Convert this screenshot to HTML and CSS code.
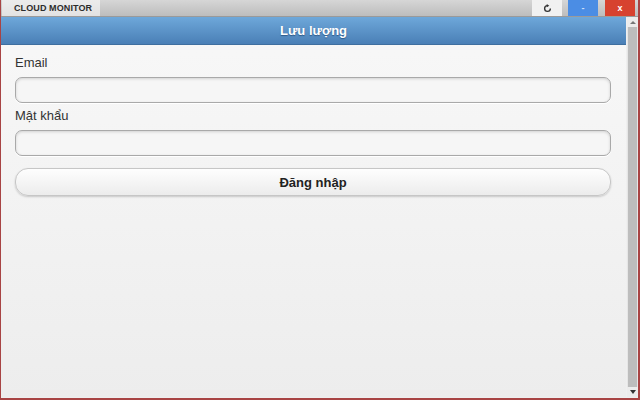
FILE: index.html
```html
<!DOCTYPE html>
<html lang="vi">
<head>
<meta charset="utf-8">
<title>Cloud Monitor</title>
<link rel="stylesheet" href="styles.css">
</head>
<body>
<div class="window">
  <div class="titlebar">
    <div class="tab">CLOUD MONITOR</div>
    <div class="spacer"></div>
    <div class="wbtn refresh">
      <svg width="9" height="9" viewBox="0 0 10 10"><path d="M8.2 5 A3.2 3.2 0 1 1 5 1.8" fill="none" stroke="#333" stroke-width="1.5"/><path d="M4.2 0 L7 1.9 L4.2 3.6 Z" fill="#333"/></svg>
    </div>
    <div class="wbtn min">-</div>
    <div class="wbtn close">x</div>
  </div>
  <div class="main">
    <div class="content">
      <div class="header">Lưu lượng</div>
      <div class="form">
        <label class="label">Email</label>
        <input class="field" type="text">
        <label class="label second">Mật khẩu</label>
        <input class="field" type="password">
        <button class="login">Đăng nhập</button>
      </div>
    </div>
    <div class="scrollbar">
      <div class="arrow up"></div>
      <div class="thumb"></div>
      <div class="arrow down"></div>
    </div>
  </div>
  <div class="bottom"></div>
</div>
</body>
</html>
```
FILE: styles.css
```css
html, body {
  margin: 0;
  padding: 0;
  width: 640px;
  height: 400px;
  overflow: hidden;
  background: #efefef;
  font-family: "Liberation Sans", Arial, sans-serif;
}
.window {
  width: 640px;
  height: 400px;
  display: flex;
  flex-direction: column;
  box-sizing: border-box;
  border-left: 1px solid #a84444;
  border-right: 2px solid #a84444;
  background: #efefef;
}
.titlebar {
  height: 16px;
  flex: none;
  display: flex;
  align-items: stretch;
  background: linear-gradient(#d6d6d6, #bdbdbd);
  border-bottom: 1px solid #9a9a9a;
}
.tab {
  margin-left: 1px;
  width: 98px;
  background: linear-gradient(#ececec, #e2e2e2);
  font-size: 9px;
  font-weight: bold;
  color: #2c2c2c;
  line-height: 17px;
  padding-left: 12px;
  box-sizing: border-box;
  letter-spacing: 0.1px;
}
.spacer { flex: 1; }
.wbtn {
  width: 30px;
  display: flex;
  align-items: center;
  justify-content: center;
  font-size: 9px;
  font-weight: bold;
  color: #fff;
}
.refresh { background: #f1f1f1; margin-right: 6px; }
.min { background: #4b8de4; margin-right: 7px; color: #cfe0f8; }
.close { background: #d7422f; margin-right: 3px; }
.main {
  flex: 1;
  display: flex;
  min-height: 0;
}
.content {
  flex: 1;
  display: flex;
  flex-direction: column;
  background: linear-gradient(#f8f8f8, #ededed);
}
.header {
  height: 27px;
  flex: none;
  background: linear-gradient(#6ea8da, #4a7fb6);
  border-bottom: 1px solid #3f6f9f;
  color: #fff;
  font-weight: bold;
  font-size: 13px;
  line-height: 27px;
  text-align: center;
  text-shadow: 0 1px 1px #2f5a88;
}
.form {
  display: flex;
  flex-direction: column;
  padding: 10px 15px 0 14px;
}
.label {
  font-size: 13px;
  line-height: 16px;
  color: #333;
  margin-bottom: 6px;
}
.label.second { margin-top: 5px; }
.field {
  height: 26px;
  box-sizing: border-box;
  border: 1px solid #a9a9a9;
  border-radius: 7px;
  background: #f6f6f6;
  box-shadow: inset 0 1px 3px rgba(0,0,0,0.15), 0 1px 0 #fff;
  margin: 0;
  padding: 0 8px;
  font-size: 13px;
  outline: none;
}
.login {
  margin-top: 12px;
  height: 28px;
  border: 1px solid #c6c6c6;
  border-radius: 13px;
  background: linear-gradient(#fefefe, #ececec);
  box-shadow: 0 1px 2px rgba(0,0,0,0.18);
  font-family: "Liberation Sans", Arial, sans-serif;
  font-weight: bold;
  font-size: 13px;
  color: #222;
  padding: 0;
}
.scrollbar {
  width: 11px;
  flex: none;
  display: flex;
  flex-direction: column;
  background: #e6e6e6;
  margin-left: 1px;
}
.arrow {
  height: 10px;
  flex: none;
  display: flex;
  align-items: center;
  justify-content: center;
  background: #ececec;
}
.arrow::before {
  content: "";
  border-left: 3px solid transparent;
  border-right: 3px solid transparent;
}
.arrow.up::before { border-bottom: 3px solid #777; }
.arrow.down::before { border-top: 4px solid #333; }
.thumb {
  flex: 1;
  background: #bdbdbd;
  margin: 0 1px;
}
.bottom {
  height: 3px;
  flex: none;
  background: linear-gradient(#efefef 0, #efefef 1px, #a84444 1px);
}
```
